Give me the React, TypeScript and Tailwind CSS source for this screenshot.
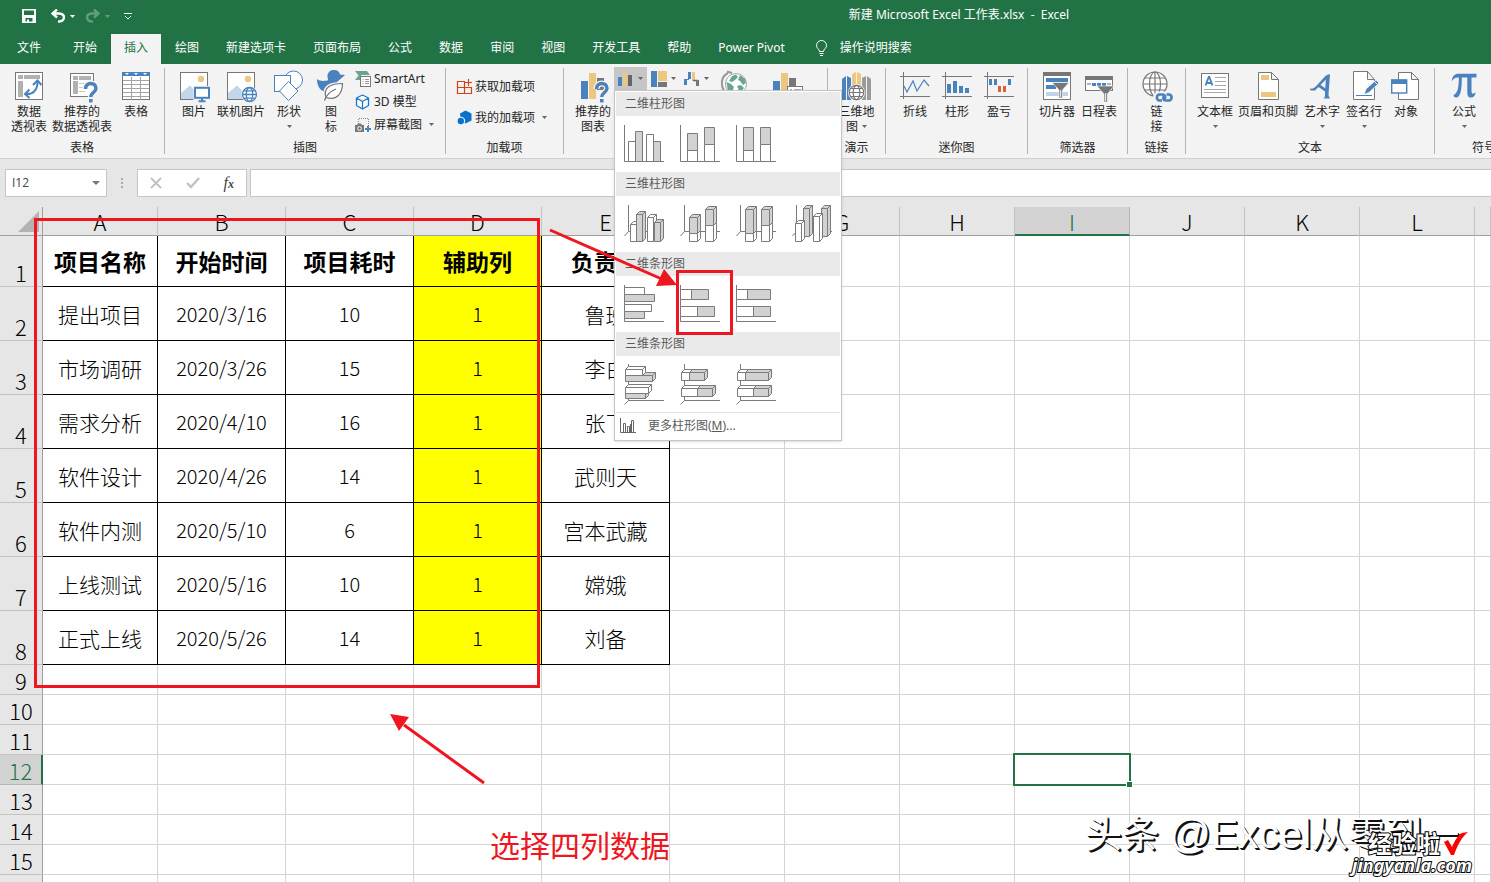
import React from "react";

type Kids = { children?: React.ReactNode };

const BLUE = "#4a82bd";
const SAND = "#edc77f";
const GRAY = "#777777";
const GREEN = "#6aa58f";

/* ---------- small building blocks ---------- */

function Caret({ className = "fill-[#666666]" }: { className?: string }) {
  return (
    <svg width="5" height="3" viewBox="0 0 5 3" className={className} aria-hidden="true">
      <path d="M0 0H5L2.5 3Z" />
    </svg>
  );
}

function Icon({ size = 32, children }: Kids & { size?: number }) {
  return (
    <svg width={size} height={size} viewBox={`0 0 ${size} ${size}`} fill="none" className="shrink-0 overflow-visible" aria-hidden="true">
      {children}
    </svg>
  );
}

function Group({ label, className, children, line = true }: Kids & { label: string; className: string; line?: boolean }) {
  return (
    <section aria-label={label} className={`flex shrink-0 ${className}`}>
      <div className="flex min-w-0 flex-1 flex-col">
        <div className="flex flex-1">{children}</div>
        <div className="h-5 text-center leading-5 whitespace-nowrap">{label}</div>
      </div>
      {line && <div className="mt-1 mb-1 w-px bg-[#b4b4b4]" />}
    </section>
  );
}

function Big({ icon, lines, caret, className = "w-[42px]" }: { icon: React.ReactNode; lines: string[]; caret?: "below" | "inline"; className?: string }) {
  return (
    <button type="button" className={`flex shrink-0 flex-col items-center pt-2 leading-[15px] whitespace-nowrap ${className}`}>
      {icon}
      {lines.map((l, i) => (
        <span key={l} className="flex items-center gap-1">
          {l}
          {caret === "inline" && i === lines.length - 1 && <Caret />}
        </span>
      ))}
      {caret === "below" && (
        <span className="flex h-[15px] items-center">
          <Caret />
        </span>
      )}
    </button>
  );
}

function Small({ icon, text, caret, className }: { icon: React.ReactNode; text: string; caret?: boolean; className: string }) {
  return (
    <button type="button" className={`flex items-center gap-[3px] whitespace-nowrap ${className}`}>
      {icon}
      <span>{text}</span>
      {caret && (
        <span className="ml-1">
          <Caret />
        </span>
      )}
    </button>
  );
}

/* ---------- ribbon icons ---------- */

const Question = () => (
  <g>
    <path d="M19.5 17C19.5 9.5 30 10 30 16.2C30 20.5 24.7 20.5 24.7 26" stroke="#f3f3f3" strokeWidth="6" />
    <path d="M19.5 17C19.5 9.5 30 10 30 16.2C30 20.5 24.7 20.5 24.7 25" stroke={BLUE} strokeWidth="3.4" />
    <rect x="23" y="27" width="3.6" height="3.4" fill={BLUE} />
  </g>
);

const PivotIcon = () => (
  <Icon>
    <rect x="2.5" y=".5" width="27" height="27" fill="#fff" stroke={GRAY} />
    <path d="M5 3h5v4H5zM11 3h16v4H11zM5 9h5v16H5z" fill="#b1b1b1" />
    <path d="M13 22C20 22.5 24.5 18 24.5 10" stroke={BLUE} strokeWidth="2" />
    <path d="M16.5 17.5L12 22L16.5 26M20 13L24.5 8.5L28.5 13" stroke={BLUE} strokeWidth="2" />
  </Icon>
);

const RecPivotIcon = () => (
  <Icon>
    <rect x="4.5" y="1.5" width="23" height="23" fill="#fff" stroke={GRAY} />
    <path d="M7 4h5v4H7zM13 4h12v4H13zM7 9h5v13H7z" fill="#b1b1b1" />
    <path d="M13 11.5h9M13 15.5h6M13 19.5h6" stroke="#c9c9c9" />
    <Question />
  </Icon>
);

const TableIcon = () => (
  <Icon>
    <rect x="2.5" y=".5" width="27" height="27" fill="#fff" stroke={GRAY} />
    <path d="M11.5 5V28M20.5 5V28M3 8.5H29M3 12.5H29M3 16.5H29M3 20.5H29M3 24.5H29" stroke="#a3a3a3" />
    <rect x="2" y="0" width="28" height="4" fill={BLUE} />
    <path d="M5 1h4l-2 2zM14 1h4l-2 2zM23 1h4l-2 2z" fill="#fff" />
  </Icon>
);

const Photo = () => (
  <g>
    <rect x="2.5" y=".5" width="27" height="27" fill="#fff" stroke={GRAY} />
    <circle cx="23" cy="7" r="3.2" fill={SAND} />
    <path d="M3 21L12 13.5L21 23V27H3Z" fill="#c3d5e8" />
  </g>
);

const PictureIcon = () => (
  <Icon>
    <Photo />
    <rect x="15.5" y="14" width="18" height="14" fill="#f3f3f3" />
    <rect x="17" y="15.8" width="14" height="10" fill="#fff" stroke={BLUE} strokeWidth="2" />
    <path d="M24 26V29M20.5 29.2H27.5" stroke={BLUE} strokeWidth="2" />
  </Icon>
);

const OnlinePictureIcon = () => (
  <Icon>
    <Photo />
    <circle cx="24.5" cy="22.5" r="8" fill="#fff" />
    <g stroke={BLUE} strokeWidth="1.3">
      <circle cx="24.5" cy="22.5" r="7" />
      <ellipse cx="24.5" cy="22.5" rx="3.2" ry="7" />
      <path d="M17.5 22.5H31.5M18.5 18.8H30.5M18.5 26.2H30.5" />
    </g>
  </Icon>
);

const ShapesIcon = () => (
  <Icon>
    <circle cx="20.5" cy="8" r="9" fill="#fff" stroke={BLUE} />
    <rect x="1.5" y="3.5" width="16" height="16" fill="#fff" stroke={BLUE} />
    <path d="M15.5 9.5L25 19L15.5 28.5L6.5 19Z" fill="#fff" stroke={BLUE} />
  </Icon>
);

const DuckIcon = () => (
  <Icon>
    <path d="M2 7C5 9.5 9 9 12.5 8.5C14 8 12 5.500 12.500 3.500C13 0 15.500-2 19-2C22.500-2 24.500 0 25 2.500L30 3L25.500 7C23.500 9 21 10 21 12C21 18 15 20.500 10 19.500C4 18.500 2 12.500 2 7Z" fill={BLUE} />
    <path d="M10 28C11 24 14 20 20 18M11 25.500C6.500 14 17 11 27.500 11.500C28 20 24 30 11 25.500Z" fill="#fff" stroke="#f3f3f3" strokeWidth="3" />
    <path d="M11 25.500C7.500 15 17 11.500 27.500 11.500C27.500 21 22 29 11 25.500Z" fill="#fff" stroke={GRAY} strokeWidth="1.2" />
    <path d="M9.500 28.500C11 24 15 19.500 21 17" stroke={GRAY} strokeWidth="1.300" />
  </Icon>
);

const SmartArtIcon = () => (
  <Icon size={16}>
    <path d="M0 0H12L15 4H6V9H0L3.500 4.500Z" fill={GREEN} />
    <rect x="5.500" y="5.500" width="10" height="10" fill="#fff" stroke={GRAY} />
    <path d="M7.500 8.500h1M10 8.500h4M7.500 10.500h1M10 10.500h4M7.500 12.500h1M10 12.500h4" stroke="#999" />
  </Icon>
);

const CubeIcon = () => (
  <Icon size={16}>
    <path d="M7.500 1L13.500 4V11.500L7.500 15L1.500 11.500V4Z M1.500 4L7.500 7.500L13.500 4M7.500 7.500V15" fill="#fff" stroke="#1978c8" strokeWidth="1.300" strokeLinejoin="round" />
  </Icon>
);

const ScreenshotIcon = () => (
  <Icon size={16}>
    <path d="M3.500 7V1.500H13.500V9" stroke="#888" strokeDasharray="1 1" />
    <path d="M0 8h2l1-1.500h3L7 8h2v7H0Z" fill="#777" />
    <circle cx="4.500" cy="11.500" r="1.900" stroke="#fff" />
    <path d="M13 9v6M10 12h6" stroke={BLUE} strokeWidth="2" />
  </Icon>
);

const StoreIcon = () => (
  <Icon size={15}>
    <path d="M.5 2.500H7.500V14.500H.5ZM.5 8.500H14.500V14.500H7.500M11.500 0V7M8 3.500H15" stroke="#d6410d" strokeWidth="1.200" />
  </Icon>
);

const MyAddinIcon = () => (
  <Icon size={15}>
    <path d="M8.500.5L14.500 3.500V10.500L8.500 13.500L4 11L3 3.500Z" fill="#0a72c8" />
    <circle cx="4" cy="11" r="4.200" fill="#f3f3f3" />
    <circle cx="3.800" cy="11" r="3.200" fill="#0a72c8" />
  </Icon>
);

const RecChartIcon = () => (
  <Icon>
    <rect x="4" y="9" width="7" height="18" fill={BLUE} />
    <rect x="12" y="1" width="7" height="26" fill={SAND} />
    <rect x="20" y="6" width="7" height="12" fill={GRAY} />
    <Question />
  </Icon>
);

const ColumnMini = () => (
  <Icon size={16}>
    <rect x="0" y="6" width="4" height="9" fill={BLUE} />
    <rect x="5" y="1" width="4" height="14" fill={SAND} />
    <rect x="10" y="4" width="4" height="11" fill="#666" />
  </Icon>
);

const TreeMini = () => (
  <Icon size={16}>
    <rect x="0" y="0" width="6" height="16" fill={BLUE} />
    <rect x="7" y="0" width="9" height="10" fill={SAND} />
    <rect x="7" y="11" width="9" height="5" fill={GRAY} />
  </Icon>
);

const WaterfallMini = () => (
  <Icon size={16}>
    <path d="M0 8H3V14H0ZM4 1H7V8H4Z" fill={BLUE} />
    <path d="M1 8.500H5" stroke={BLUE} />
    <rect x="8" y="1" width="3" height="9" fill={SAND} />
    <path d="M9 9.500H14M13.500 9V15" stroke="#666" strokeWidth="1.500" />
    <path d="M12 9H15V15H12Z" fill="#777" />
  </Icon>
);

const MapIcon = () => (
  <Icon>
    <circle cx="17" cy="12" r="10.500" fill="#fff" stroke="#a8a8a8" />
    <path d="M13 4L17 2.500L19 5L16 8L13 10L10 9ZM21 3L26 7L27 11L24 13L21 9L19 8ZM7.500 10L12 12L15 15L13 20L9 19ZM18 14L22 13L25 16L21 21Z" fill={GREEN} />
    <path d="M8-.5L13 1M9 1C1 5 2 14 5 19" stroke="#999" strokeWidth="2" />
  </Icon>
);

const PivotChartIcon = () => (
  <Icon>
    <rect x="1" y="9" width="7" height="18" fill={BLUE} />
    <rect x="9" y="1" width="7" height="26" fill={SAND} />
    <rect x="17" y="6" width="7" height="12" fill={GRAY} />
    <rect x="15.500" y="14.500" width="15" height="12" fill="#fff" stroke={GRAY} />
    <path d="M18 17h2v2h-2zM22 17h7v2h-7z" fill="#aaa" />
  </Icon>
);

const Map3DIcon = () => (
  <Icon>
    <path d="M1 7L5 4V28H1ZM6 4L10 6V28H6Z" fill={BLUE} />
    <path d="M11 2L15 0V22H11ZM16 0L20 2V22H16Z" fill={SAND} />
    <path d="M21 6L25 4V28H21ZM26 4L30 7V28H26Z" fill="#9a9a9a" />
    <circle cx="15.500" cy="20.500" r="8.500" fill="#f3f3f3" />
    <g stroke={GRAY} strokeWidth="1.200">
      <circle cx="15.500" cy="20.500" r="7.200" fill="#fff" />
      <ellipse cx="15.500" cy="20.500" rx="3.300" ry="7.200" />
      <path d="M8.500 20.500H22.500M9.500 16.500H21.500M9.500 24.500H21.500" />
    </g>
  </Icon>
);

const SparkFrame = () => <path d="M4.500 0V27M1 4.500H31M1 24.500H31" stroke={GRAY} />;

const SparkLineIcon = () => (
  <Icon>
    <SparkFrame />
    <path d="M5 14L8 20L14 9L18 19L25 8L30 14" stroke={BLUE} strokeWidth="1.200" />
  </Icon>
);

const SparkColumnIcon = () => (
  <Icon>
    <SparkFrame />
    <path d="M6 12h4v9H6zM12 9h4v12h-4zM18 14h4v7h-4zM24 16h4v5h-4z" fill={BLUE} />
  </Icon>
);

const SparkWinLossIcon = () => (
  <Icon>
    <SparkFrame />
    <path d="M6 7h3v6H6zM11 7h3v6h-3zM25 7h3v6h-3z" fill={BLUE} />
    <path d="M15 14h3v6h-3zM20 14h3v6h-3z" fill="#d9603f" />
  </Icon>
);

const SlicerIcon = () => (
  <Icon>
    <rect x="2.500" y=".5" width="27" height="27" fill="#fff" stroke={GRAY} />
    <rect x="2" y="0" width="28" height="4" fill={GRAY} />
    <path d="M5 6h22v4H5zM5 13h10v4H5z" fill={BLUE} />
    <path d="M5 20h22v4H5z" fill="#bed2e8" />
    <path d="M11 10.500H28L21.500 18V26H18V18Z" fill={GRAY} stroke="#fff" strokeWidth=".6" />
    <path d="M19.700 18V25" stroke="#fff" />
  </Icon>
);

const TimelineIcon = () => (
  <Icon>
    <rect x="2.500" y="4.500" width="27" height="14" fill="#fff" stroke={GRAY} />
    <rect x="2" y="4" width="28" height="4" fill={GRAY} />
    <path d="M4 11h4v2H4zM24 11h4v2h-4z" fill="#b0b0b0" />
    <path d="M9 11h4v3H9zM14 11h4v3h-4zM19 11h4v3h-4z" fill={BLUE} />
    <path d="M14 14H31L24.500 22V30H21V22Z" fill={GRAY} stroke="#fff" strokeWidth=".6" />
    <path d="M22.700 21V29" stroke="#fff" />
  </Icon>
);

const LinkIcon = () => (
  <Icon>
    <g stroke={GRAY} strokeWidth="1.200">
      <circle cx="14" cy="12" r="12" fill="#fff" />
      <ellipse cx="14" cy="12" rx="5.500" ry="12" />
      <path d="M14 0V24M2 12H26M4 6H24M4 18H24" />
    </g>
    <rect x="12" y="19.500" width="22" height="12" rx="6" fill="#f3f3f3" />
    <g stroke={BLUE} strokeWidth="2.600">
      <path d="M21 28.500H18A3.200 3.200 0 0 1 18 22.500H21.500C24 22.500 25 25 23.500 27" />
      <path d="M25.500 22.500H28.500A3.200 3.200 0 0 1 28.500 28.500H25C22 28.500 21.500 26 23 24" />
    </g>
  </Icon>
);

const TextBoxIcon = () => (
  <Icon>
    <rect x="2.500" y="1.500" width="27" height="24" fill="#fff" stroke={GRAY} />
    <path d="M6.500 13.500L9.700 5H10.300L13.500 13.500M7.800 11H12.300" stroke={BLUE} strokeWidth="1.800" />
    <path d="M16 5.500H27M16 9.500H27M16 13.500H27M5 17.500H27M5 20.500H27" stroke="#a9a9a9" />
  </Icon>
);

const Page = () => <path d="M6.500.5H19.500L26.500 7.500V27.500H6.500ZM19.500.5V7.500H26.500" fill="#fff" stroke={GRAY} />;

const HeaderFooterIcon = () => (
  <Icon>
    <Page />
    <path d="M9 3h8v5H9zM9 20h15v5H9z" fill={SAND} />
  </Icon>
);

const WordArtIcon = () => (
  <Icon>
    <path d="M4 16.500C7 17 8.500 16 10.500 13.800L18.500 5C20 3 22 2.500 24 2.200L22.500 22.500C22.500 24.500 23.500 25 24 26.500H17.500C18.500 25.500 19 24.500 19 23V19.500L12.500 15L9 18.500L4.500 18.500ZM14.500 13L19.300 16.200L19.800 7.500Z" fill={BLUE} fillRule="evenodd" />
  </Icon>
);

const SignatureIcon = () => (
  <Icon>
    <path d="M5.500-.5H19.500L26.500 7.500V27.500H5.500ZM19.500-.5V7.500H26.500" fill="#fff" stroke={GRAY} />
    <path d="M8 23.500H24" stroke={BLUE} />
    <path d="M16 22.500L18 17L28 8L31 11L21 20.500Z" fill={BLUE} stroke="#fff" strokeWidth=".7" />
    <path d="M26.500 9.500L29.500 12.500" stroke="#fff" />
  </Icon>
);

const ObjectIcon = () => (
  <Icon>
    <path d="M8.500.5H21.500L28.500 7.500V27.500H8.500ZM21.500.5V7.500H28.500" fill="#fff" stroke={GRAY} />
    <rect x="1.700" y="8" width="15" height="13" fill="#fff" stroke={BLUE} strokeWidth="1.400" />
    <rect x="1" y="7.500" width="16" height="4.500" fill={BLUE} />
  </Icon>
);

const PiIcon = () => (
  <Icon>
    <path
      d="M3.500 9.500C4.500 4 6.500 1.800 10.500 1.800H28.500V5.500H23.500V18.500C23.500 22 25 22.500 27.800 20.500C27 24 25.500 25.500 23 25.500C20 25.500 19.300 23.500 19.300 20V5.500H13.800C13.800 12 13.500 17 12.500 20.500C11.500 24 10.300 25.500 8.200 25.500C6.500 25.500 5.500 24.300 5.500 23C9.500 21.500 10.800 16 10.800 5.500C7.500 5.500 6 6 3.500 9.500Z"
      fill={BLUE}
    />
  </Icon>
);

/* ---------- chart gallery ---------- */

const G = "#d2d2d2";
const W = "#ffffff";

type Box = [x: number, y: number, w: number, h: number, fill: string];

function Gallery({ axis, boxes, depth = 0 }: { axis: string; boxes: Box[]; depth?: number }) {
  return (
    <svg width="40" height="40" viewBox="0 0 40 40" className="overflow-visible" stroke="#7b7b7b" strokeLinejoin="round" aria-hidden="true">
      <path d={axis} fill="none" />
      {boxes.map(([x, y, w, h, fill], i) => (
        <g key={i} fill={fill}>
          {depth > 0 && (
            <path d={`M${x} ${y}l${depth} ${-depth}h${w}v${h}l${-depth} ${depth}v${-h}zM${x + w} ${y}l${depth} ${-depth}`} />
          )}
          <rect x={x} y={y} width={w} height={h} />
        </g>
      ))}
    </svg>
  );
}

const FLAT = "M.5 1V37.500H40";
const DEEP = "M4.500 1V27.500L.5 32M4.500 27.500H40";
const DEEP_BAR = "M4.500 0V36.500L.5 40.500M4.500 36.500H40";

const SECTIONS: { title: string; depth: number; axis: string; charts: { name: string; boxes: Box[] }[] }[] = [
  {
    title: "二维柱形图",
    depth: 0,
    axis: FLAT,
    charts: [
      { name: "簇状柱形图", boxes: [[4.5, 17.5, 7, 20, W], [11.5, 7.5, 7, 30, G], [22.5, 10.5, 7, 27, W], [29.5, 17.5, 7, 20, G]] },
      { name: "堆积柱形图", boxes: [[7.5, 9.5, 10, 17, G], [7.5, 26.5, 10, 11, W], [24.5, 3.5, 10, 17, G], [24.5, 20.5, 10, 17, W]] },
      { name: "百分比堆积柱形图", boxes: [[7.5, 3.5, 10, 23, G], [7.5, 26.5, 10, 11, W], [24.5, 3.5, 10, 17, G], [24.5, 20.5, 10, 17, W]] },
    ],
  },
  {
    title: "三维柱形图",
    depth: 3,
    axis: DEEP,
    charts: [
      { name: "三维簇状柱形图", boxes: [[6.5, 20.5, 6, 17, W], [12.5, 10.5, 6, 27, G], [23.5, 13.5, 6, 24, W], [30.5, 18.5, 6, 19, G]] },
      { name: "三维堆积柱形图", boxes: [[9.5, 29.5, 8, 8, W], [9.5, 13.5, 8, 16, G], [25.5, 21.5, 8, 16, W], [25.5, 5.5, 8, 16, G]] },
      { name: "三维百分比堆积柱形图", boxes: [[9.5, 29.5, 8, 8, W], [9.5, 5.5, 8, 24, G], [25.5, 21.5, 8, 16, W], [25.5, 5.5, 8, 16, G]] },
      { name: "三维柱形图", boxes: [[11.5, 4.5, 6, 28, G], [3.5, 19.5, 6, 18, W], [29.5, 4.5, 6, 28, G], [21.5, 12.5, 6, 25, W]] },
    ],
  },
  {
    title: "二维条形图",
    depth: 0,
    axis: FLAT,
    charts: [
      { name: "簇状条形图", boxes: [[0.5, 3.5, 20, 7, W], [0.5, 10.5, 30, 7, G], [0.5, 20.5, 27, 7, W], [0.5, 27.5, 20, 7, G]] },
      { name: "堆积条形图", boxes: [[0.5, 5.5, 11, 10, W], [11.5, 5.5, 17, 10, G], [0.5, 22.5, 17, 10, W], [17.5, 22.5, 17, 10, G]] },
      { name: "百分比堆积条形图", boxes: [[0.5, 5.5, 11, 10, W], [11.5, 5.5, 23, 10, G], [0.5, 22.5, 17, 10, W], [17.5, 22.5, 17, 10, G]] },
    ],
  },
  {
    title: "三维条形图",
    depth: 3,
    axis: DEEP_BAR,
    charts: [
      { name: "三维簇状条形图", boxes: [[1.5, 11.5, 27, 6, G], [1.5, 5.5, 17, 6, W], [1.5, 29.5, 20, 5, G], [1.5, 23.5, 23, 6, W]] },
      { name: "三维堆积条形图", boxes: [[1.5, 8.5, 8, 8, W], [9.5, 8.5, 15, 8, G], [1.5, 24.5, 16, 8, W], [17.5, 24.5, 15, 8, G]] },
      { name: "三维百分比堆积条形图", boxes: [[1.5, 8.5, 8, 8, W], [9.5, 8.5, 23, 8, G], [1.5, 24.5, 16, 8, W], [17.5, 24.5, 15, 8, G]] },
    ],
  },
];

function ChartMenu() {
  return (
    <div className="absolute top-full left-0 z-20 w-[228px] border border-[#c6c6c6] bg-white p-px text-[#5a5a5a] shadow-sm">
      {SECTIONS.map((s) => (
        <div key={s.title}>
          <div className="h-6 bg-[#eaeaea] pl-[9px] leading-[23px]">{s.title}</div>
          <div className="flex h-14">
            {s.charts.map((c) => (
              <button key={c.name} type="button" aria-label={c.name} className="flex w-14 items-center justify-center">
                <Gallery axis={s.axis} boxes={c.boxes} depth={s.depth} />
              </button>
            ))}
          </div>
        </div>
      ))}
      <button type="button" className="flex h-[27px] w-full items-center gap-3 border-t border-[#e1e1e1] pl-1">
        <svg width="16" height="16" viewBox="0 0 16 16" fill="none" stroke="#666" aria-hidden="true">
          <path d="M.5 0V14.500H16" />
          <path d="M3.500 14V5.500H5.500V14M7.500 14V8.500H9.500V14M11.500 14V2.500H13.500V14M10.500 14V6" />
        </svg>
        <span>
          更多柱形图(<u>M</u>)...
        </span>
      </button>
    </div>
  );
}

/* ---------- title bar, tabs, ribbon ---------- */

const TABS = ["开始", "插入", "绘图", "新建选项卡", "页面布局", "公式", "数据", "审阅", "视图", "开发工具", "帮助", "Power Pivot"];

function TitleBar() {
  return (
    <header className="flex h-[34px] text-white">
      <div className="flex h-8 w-[427px] shrink-0 items-center pl-[22px]">
        <button type="button" aria-label="保存">
          <svg width="14" height="14" viewBox="0 0 14 14" aria-hidden="true">
            <path fillRule="evenodd" d="M0 0H14V14H0ZM2 1.500V6H12V1.500ZM3.500 9V12.500H5V10.500H7V12.500H10.500V9Z" fill="#fff" />
          </svg>
        </button>
        <button type="button" aria-label="撤消" className="ml-[15px] flex items-center gap-[5px]">
          <svg width="14" height="14" viewBox="0 0 14 14" fill="none" stroke="#fff" strokeWidth="2.400" aria-hidden="true">
            <path d="M6 .5L1.500 4.500L6 8.500M2 4.500H8C15 4.500 14.500 12.500 7 12.500" />
          </svg>
          <Caret className="fill-white" />
        </button>
        <button type="button" aria-label="恢复" className="ml-[11px] flex items-center gap-[5px] opacity-30">
          <svg width="14" height="14" viewBox="0 0 14 14" fill="none" stroke="#fff" strokeWidth="2.400" aria-hidden="true">
            <path d="M8 .5L12.500 4.500L8 8.500M12 4.500H6C-1 4.500-.5 12.500 7 12.500" />
          </svg>
          <Caret className="fill-white" />
        </button>
        <button type="button" aria-label="自定义快速访问工具栏" className="ml-[14px]">
          <svg width="8" height="8" viewBox="0 0 8 8" fill="none" stroke="#fff" aria-hidden="true">
            <path d="M0 1.500H8M1 4L4 7L7 4" />
          </svg>
        </button>
      </div>
      <h1 className="flex-1 text-center leading-[30px] whitespace-pre">{"新建 Microsoft Excel 工作表.xlsx  -  Excel"}</h1>
    </header>
  );
}

function Tabs() {
  return (
    <nav className="flex h-[30px] gap-px pl-1 leading-[27px] whitespace-nowrap text-white">
      <button type="button" className="mr-[5px] px-[13px]">
        <span className="block h-full">文件</span>
      </button>
      {TABS.map((t) => (
        <button key={t} type="button" className={t === "插入" ? "bg-[#f3f3f3] px-[13px] text-[#217346]" : "px-[13px]"}>
          <span className="block h-full">{t}</span>
        </button>
      ))}
      <button type="button" className="ml-4 flex gap-3">
        <svg width="13" height="17" viewBox="0 0 13 17" fill="none" stroke="#fff" className="mt-[6px]" aria-hidden="true">
          <path d="M4.500 11.500C4.500 9 1.500 8.500 1.500 5.500A5 5 0 0 1 11.500 5.500C11.500 8.500 8.500 9 8.500 11.500ZM4.500 13.500H8.500M5 15.500H8" />
        </svg>
        <span>操作说明搜索</span>
      </button>
    </nav>
  );
}

function Ribbon() {
  return (
    <div className="flex h-[95px] border-b border-[#d0d0d0] bg-[#f3f3f3] text-[#262626]">
      <Group label="表格" className="w-[165px]">
        <Big icon={<PivotIcon />} lines={["数据", "透视表"]} className="ml-1 w-[50px]" />
        <Big icon={<RecPivotIcon />} lines={["推荐的", "数据透视表"]} className="w-14" />
        <Big icon={<TableIcon />} lines={["表格"]} className="w-[52px]" />
      </Group>
      <Group label="插图" className="w-[281px]">
        <Big icon={<PictureIcon />} lines={["图片"]} className="ml-1 w-[50px]" />
        <Big icon={<OnlinePictureIcon />} lines={["联机图片"]} className="w-11" />
        <Big icon={<ShapesIcon />} lines={["形状"]} caret="below" className="w-[52px]" />
        <Big icon={<DuckIcon />} lines={["图", "标"]} className="w-8" />
        <div className="flex flex-col pt-[3px] pl-2">
          <Small className="h-[23px]" icon={<SmartArtIcon />} text="SmartArt" />
          <Small className="h-[23px]" icon={<CubeIcon />} text="3D 模型" />
          <Small className="h-[23px]" icon={<ScreenshotIcon />} text="屏幕截图" caret />
        </div>
      </Group>
      <Group label="加载项" className="w-[118px]">
        <div className="flex flex-col pt-[7px] pl-[11px]">
          <Small className="h-[31px]" icon={<StoreIcon />} text="获取加载项" />
          <Small className="h-[31px]" icon={<MyAddinIcon />} text="我的加载项" caret />
        </div>
      </Group>
      <Group label="图表" className="w-[264px]">
        <Big icon={<RecChartIcon />} lines={["推荐的", "图表"]} className="ml-2 w-[42px]" />
        <div className="relative mt-[3px] h-[23px]">
          <button type="button" aria-label="插入柱形图或条形图" className="flex h-[23px] w-[33px] items-center justify-center gap-1 bg-[#c6c6c6]">
            <ColumnMini />
            <Caret />
          </button>
          <ChartMenu />
        </div>
        <button type="button" aria-label="插入层次结构图表" className="mt-[3px] flex h-[23px] w-[33px] items-center justify-center gap-1">
          <TreeMini />
          <Caret />
        </button>
        <button type="button" aria-label="插入瀑布图" className="mt-[3px] flex h-[23px] w-[33px] items-center justify-center gap-1">
          <WaterfallMini />
          <Caret />
        </button>
        <Big icon={<MapIcon />} lines={["地图"]} className="w-11" />
        <Big icon={<PivotChartIcon />} lines={["数据透视图"]} className="w-[62px]" />
      </Group>
      <Group label="演示" className="w-[58px]">
        <Big icon={<Map3DIcon />} lines={["三维地", "图"]} caret="inline" className="w-full" />
      </Group>
      <Group label="迷你图" className="w-[142px]">
        <Big icon={<SparkLineIcon />} lines={["折线"]} className="ml-2 w-[42px]" />
        <Big icon={<SparkColumnIcon />} lines={["柱形"]} />
        <Big icon={<SparkWinLossIcon />} lines={["盈亏"]} />
      </Group>
      <Group label="筛选器" className="w-[100px]">
        <Big icon={<SlicerIcon />} lines={["切片器"]} className="ml-2 w-[42px]" />
        <Big icon={<TimelineIcon />} lines={["日程表"]} />
      </Group>
      <Group label="链接" className="w-[58px]">
        <Big icon={<LinkIcon />} lines={["链", "接"]} className="w-full" />
      </Group>
      <Group label="文本" className="w-[249px]">
        <Big icon={<TextBoxIcon />} lines={["文本框"]} caret="below" className="ml-2 w-[42px]" />
        <Big icon={<HeaderFooterIcon />} lines={["页眉和页脚"]} className="w-16" />
        <Big icon={<WordArtIcon />} lines={["艺术字"]} caret="below" className="w-11" />
        <Big icon={<SignatureIcon />} lines={["签名行"]} caret="below" className="w-10" />
        <Big icon={<ObjectIcon />} lines={["对象"]} className="w-11" />
      </Group>
      <Group label="符号" className="w-[98px]" line={false}>
        <Big icon={<PiIcon />} lines={["公式"]} caret="below" className="ml-2 w-[42px]" />
      </Group>
    </div>
  );
}

function FormulaBar() {
  return (
    <div className="flex h-12 bg-[#e6e6e6] pt-[10px] pl-[5px]">
      <div className="flex h-7 w-[102px] items-center border border-[#c6c6c6] bg-white pr-[6px]">
        <input aria-label="名称框" defaultValue="I12" className="w-full min-w-0 bg-transparent pl-[6px] font-['Open_Sans',sans-serif] text-[#444444] outline-none" />
        <svg width="8" height="4" viewBox="0 0 8 4" fill="#777" className="shrink-0" aria-hidden="true">
          <path d="M0 0H8L4 4Z" />
        </svg>
      </div>
      <div className="flex h-7 w-[30px] items-center justify-center">
        <svg width="2" height="10" viewBox="0 0 2 10" fill="#a8a8a8" aria-hidden="true">
          <path d="M0 0h2v2H0zM0 4h2v2H0zM0 8h2v2H0z" />
        </svg>
      </div>
      <div className="flex h-7 w-[110px] items-center justify-around border border-[#c6c6c6] bg-white">
        <button type="button" aria-label="取消">
          <svg width="12" height="12" viewBox="0 0 12 12" stroke="#c0c0c0" strokeWidth="1.800" aria-hidden="true">
            <path d="M1 1L11 11M11 1L1 11" />
          </svg>
        </button>
        <button type="button" aria-label="输入">
          <svg width="14" height="12" viewBox="0 0 14 12" fill="none" stroke="#c0c0c0" strokeWidth="2.400" aria-hidden="true">
            <path d="M1 6L5 10L13 1" />
          </svg>
        </button>
        <button type="button" aria-label="插入函数" className="font-['Liberation_Serif',serif] text-base leading-5 text-[#444444] italic">
          f<span className="text-xs font-bold">x</span>
        </button>
      </div>
      <input aria-label="编辑栏" className="ml-[3px] h-7 min-w-0 flex-1 border border-r-0 border-[#c6c6c6] bg-white px-2 outline-none" />
    </div>
  );
}

/* ---------- worksheet ---------- */

const COLS = ["A", "B", "C", "D", "E", "F", "G", "H", "I", "J", "K", "L", "M"];

const DATA = [
  ["项目名称", "开始时间", "项目耗时", "辅助列", "负责人"],
  ["提出项目", "2020/3/16", "10", "1", "鲁班"],
  ["市场调研", "2020/3/26", "15", "1", "李白"],
  ["需求分析", "2020/4/10", "16", "1", "张飞"],
  ["软件设计", "2020/4/26", "14", "1", "武则天"],
  ["软件内测", "2020/5/10", "6", "1", "宫本武藏"],
  ["上线测试", "2020/5/16", "10", "1", "嫦娥"],
  ["正式上线", "2020/5/26", "14", "1", "刘备"],
];

function cellClass(r: number, c: number, text: string) {
  const base = "relative border-r border-b p-0 text-center align-middle whitespace-nowrap";
  if (r > 7 || c > 4) return `${base} border-[#d4d4d4]`;
  const fill = c === 3 ? "bg-[#ffff00]" : "bg-white";
  const font = r === 0 ? "text-[23px] font-bold" : /^[\d/]+$/.test(text) ? "text-[20px] font-light" : "text-[21px] font-light";
  return `${base} border-black leading-7 ${fill} ${font}`;
}

function Sheet() {
  return (
    <table className="w-full table-fixed border-separate border-spacing-0 bg-white font-['Noto_Sans_CJK_SC',sans-serif] text-black">
      <colgroup>
        <col className="w-[43px]" />
        <col className="w-[115px]" />
        <col className="w-32" />
        <col className="w-32" />
        <col className="w-32" />
        <col className="w-32" />
        {COLS.slice(5, 12).map((c) => (
          <col key={c} className="w-[115px]" />
        ))}
        <col />
      </colgroup>
      <thead>
        <tr className="h-[29px]">
          <td className="border-r border-b border-[#9f9f9f] bg-[#e6e6e6] p-0">
            <svg width="21" height="21" viewBox="0 0 21 21" className="ml-[18px]" aria-hidden="true">
              <path d="M21 0V21H0Z" fill="#b3b3b3" />
            </svg>
          </td>
          {COLS.map((c) => (
            <th
              key={c}
              scope="col"
              className={
                c === "I"
                  ? "border-r border-b-2 border-r-[#b5b5b5] border-b-[#217346] bg-[#d2d2d2] p-0 align-bottom text-[22px] leading-[26px] font-light text-[#217346]"
                  : "border-r border-b border-r-[#c3c3c3] border-b-[#9f9f9f] bg-[#e6e6e6] p-0 align-bottom text-[22px] leading-7 font-light"
              }
            >
              {c === "M" ? "" : c}
            </th>
          ))}
        </tr>
      </thead>
      <tbody>
        {Array.from({ length: 16 }, (_, r) => (
          <tr key={r} className={r === 0 ? "h-[51px]" : r < 8 ? "h-[54px]" : "h-[30px]"}>
            <th
              scope="row"
              className={
                r === 11
                  ? "border-r-2 border-b border-r-[#217346] border-b-[#b5b5b5] bg-[#d2d2d2] p-0 align-bottom text-[22px] leading-7 font-light text-[#217346]"
                  : "border-r border-b border-r-[#9f9f9f] border-b-[#c3c3c3] bg-[#e6e6e6] p-0 align-bottom text-[22px] leading-7 font-light"
              }
            >
              {r + 1}
            </th>
            {COLS.map((col, c) => {
              const text = DATA[r]?.[c] ?? "";
              return (
                <td key={col} className={r === 11 && c === 8 ? `z-10 ${cellClass(r, c, text)}` : cellClass(r, c, text)}>
                  {text}
                  {r === 11 && c === 8 && (
                    <div className="absolute -inset-[2px] border-2 border-[#217346]">
                      <div className="absolute -right-[4px] -bottom-[4px] h-[7px] w-[7px] border border-white bg-[#217346]" />
                    </div>
                  )}
                </td>
              );
            })}
          </tr>
        ))}
      </tbody>
    </table>
  );
}

/* ---------- annotations drawn over the sheet ---------- */

function Annotations() {
  return (
    <div className="pointer-events-none absolute inset-0 z-30">
      <div className="absolute top-[218px] left-[34px] h-[470px] w-[506px] border-3 border-[#ee1620]" />
      <div className="absolute top-[270px] left-[676px] h-[65px] w-[57px] border-3 border-[#ee1620]" />
      <svg className="absolute top-0 left-0" width="740" height="800" viewBox="0 0 740 800" aria-hidden="true">
        <path d="M550 230L664 280M484 783L404 725" stroke="#ee1620" strokeWidth="3" />
        <path d="M677 285L656 286L664 269ZM390 714L409 717L399 731Z" fill="#ee1620" />
      </svg>
      <p className="absolute top-[826px] left-[490px] text-[30px] leading-10 whitespace-nowrap text-[#ee1620]">选择四列数据</p>
      <p className="absolute top-[811px] left-[1085px] font-['Liberation_Sans','Noto_Sans_CJK_SC',sans-serif] text-[37px] leading-[46px] whitespace-nowrap text-white [text-shadow:2px_2px_0_#111,1px_1px_0_#111]">
        头条 <span className="text-[41px]">@Excel</span>从零到一
      </p>
      <div className="absolute top-[831px] left-[1352px] text-white [-webkit-text-stroke:2px_#000] [paint-order:stroke_fill]">
        <p className="flex h-[25px] items-center pl-4 text-[24px] leading-[25px] font-bold whitespace-nowrap">
          经验啦
          <svg width="24" height="24" viewBox="0 0 24 24" className="ml-1" aria-hidden="true">
            <path d="M0 10L4 8L8 15C11 8 15 2 18 1L24 0C18 5 14 12 10 23H7Z" fill="#ff0000" />
          </svg>
        </p>
        <p className="font-['Noto_Sans',sans-serif] text-[18px] leading-[18px] font-bold italic">jingyanla.com</p>
      </div>
    </div>
  );
}

export default function App() {
  return (
    <div className="relative h-screen overflow-hidden bg-[#217346] font-['Noto_Sans','Noto_Sans_CJK_SC',sans-serif] text-[12px]">
      <TitleBar />
      <Tabs />
      <Ribbon />
      <FormulaBar />
      <Sheet />
      <Annotations />
    </div>
  );
}
